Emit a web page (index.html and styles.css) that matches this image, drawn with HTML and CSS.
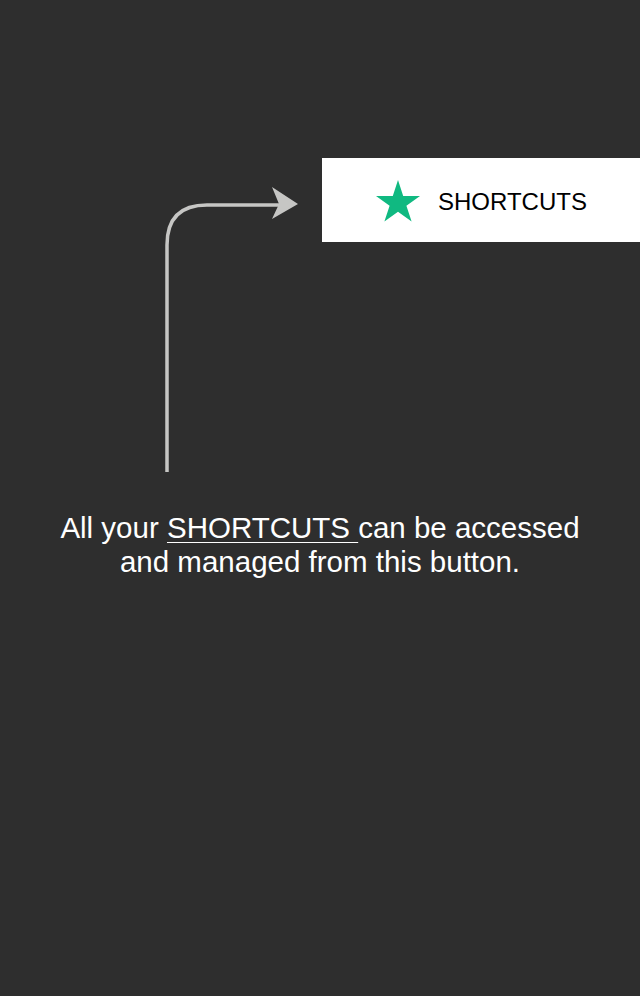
FILE: index.html
```html
<!DOCTYPE html>
<html>
<head>
<meta charset="utf-8">
<link rel="stylesheet" href="styles.css">
</head>
<body>
<div class="screen">
  <div class="top">
    <div class="shortcut-btn">
      <svg class="star" width="44" height="42" viewBox="0 0 44 42"><polygon points="22,0 27.2,15.9 44,15.9 30.4,25.7 35.6,41.6 22,31.8 8.4,41.6 13.6,25.7 0,15.9 16.8,15.9" fill="#10b981"/></svg>
      <span class="btn-label">SHORTCUTS</span>
    </div>
  </div>
  <svg class="arrow" width="320" height="480" viewBox="0 0 320 480">
    <path d="M167 472 L167 245 Q167 205 207 205 L282 205" fill="none" stroke="#c6c6c4" stroke-width="3.5"/>
    <polygon points="298,204 272,187 279,204 272,219" fill="#c6c6c4"/>
  </svg>
  <p class="message">All your <u>SHORTCUTS </u>can be accessed<br>and managed from this button.</p>
</div>
</body>
</html>
```
FILE: styles.css
```css
html, body {
  margin: 0;
  padding: 0;
  background: #2e2e2e;
}
.screen {
  position: relative;
  width: 640px;
  height: 996px;
  background: #2e2e2e;
  font-family: "Liberation Sans", Arial, sans-serif;
}
.top {
  display: flex;
  justify-content: flex-end;
  padding-top: 158px;
}
.shortcut-btn {
  width: 318px;
  height: 84px;
  background: #fff;
  display: flex;
  align-items: center;
  box-sizing: border-box;
  padding-left: 54px;
  gap: 18px;
}
.star {
  display: block;
  margin-top: 1px;
}
.btn-label {
  font-size: 24px;
  color: #000;
  margin-top: 4px;
}
.arrow {
  position: absolute;
  left: 0;
  top: 0;
  width: 320px;
  height: 480px;
}
.message {
  margin: 0;
  padding-top: 269px;
  text-align: center;
  color: #fff;
  font-size: 29.5px;
  line-height: 34px;
}
.message u {
  text-decoration-thickness: 1px;
  text-underline-offset: 4px;
}
```
